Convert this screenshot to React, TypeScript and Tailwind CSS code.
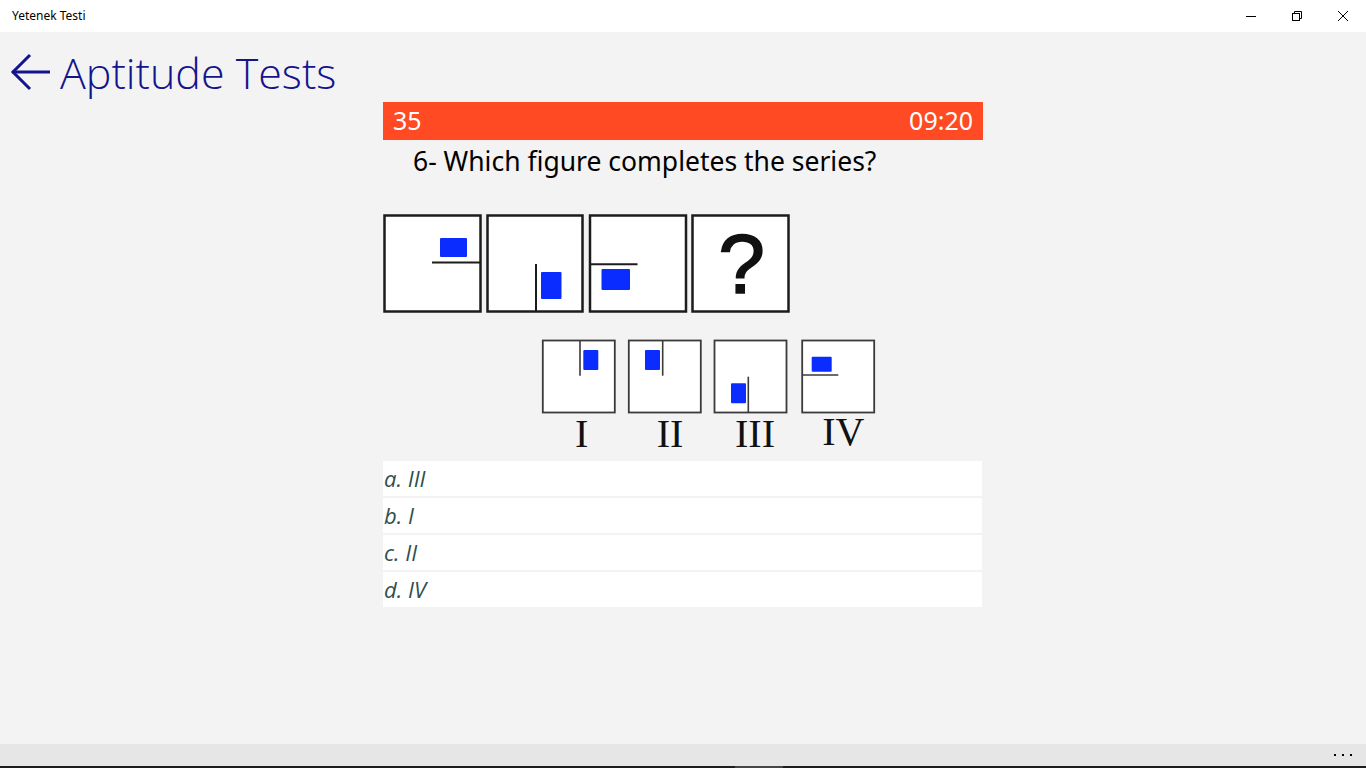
import React from "react";

function Figure() {
  const blue = "#0a2cff";
  const dark = "#1c1c1c";
  const gray = "#3a3a3a";
  return (
    <svg width="495" height="244" viewBox="0 0 495 244" className="block">
      {/* Row 1 */}
      <rect x="1.5" y="1.5" width="96" height="96" fill="#fff" stroke={dark} strokeWidth="2.5" />
      <line x1="49" y1="48.6" x2="97" y2="48.6" stroke={dark} strokeWidth="2" />
      <rect x="57" y="24" width="27" height="19" fill={blue} rx="1" />

      <rect x="104.5" y="1.5" width="95" height="96" fill="#fff" stroke={dark} strokeWidth="2.5" />
      <line x1="153" y1="50" x2="153" y2="97" stroke={dark} strokeWidth="2" />
      <rect x="158" y="58" width="20.5" height="27" fill={blue} rx="1" />

      <rect x="207" y="1.5" width="96" height="96" fill="#fff" stroke={dark} strokeWidth="2.5" />
      <line x1="207" y1="50.3" x2="254.5" y2="50.3" stroke={dark} strokeWidth="2" />
      <rect x="218.5" y="55" width="28.5" height="21" fill={blue} rx="1" />

      <rect x="309.5" y="1.5" width="96" height="96" fill="#fff" stroke={dark} strokeWidth="2.5" />
      <text
        x="358.5"
        y="79"
        textAnchor="middle"
        fontFamily="'Liberation Sans', Arial, sans-serif"
        fontSize="84"
        fontWeight="400"
        fill="#111"
        stroke="#111"
        strokeWidth="1.6"
      >
        ?
      </text>

      {/* Options */}
      <rect x="159.8" y="126.5" width="72" height="72" fill="#fff" stroke={gray} strokeWidth="1.8" />
      <line x1="197" y1="126" x2="197" y2="161.7" stroke={gray} strokeWidth="1.6" />
      <rect x="200.3" y="136" width="15" height="20" fill={blue} rx="1" />

      <rect x="245.8" y="126.5" width="72" height="72" fill="#fff" stroke={gray} strokeWidth="1.8" />
      <line x1="279.7" y1="126" x2="279.7" y2="161.7" stroke={gray} strokeWidth="1.6" />
      <rect x="262" y="136" width="15" height="20" fill={blue} rx="1" />

      <rect x="331.5" y="126.5" width="72" height="72" fill="#fff" stroke={gray} strokeWidth="1.8" />
      <line x1="365.3" y1="162.7" x2="365.3" y2="198.7" stroke={gray} strokeWidth="1.6" />
      <rect x="348" y="169.3" width="15" height="20" fill={blue} rx="1" />

      <rect x="419.2" y="126.5" width="72" height="72" fill="#fff" stroke={gray} strokeWidth="1.8" />
      <line x1="419" y1="161" x2="455.3" y2="161" stroke={gray} strokeWidth="1.6" />
      <rect x="428.7" y="142.7" width="20" height="15" fill={blue} rx="1" />

      <g fontFamily="'Liberation Serif', 'Times New Roman', serif" fontSize="40" fill="#111" textAnchor="middle">
        <text x="198.7" y="232.7">I</text>
        <text x="287" y="232.7">II</text>
        <text x="372" y="232.7">III</text>
        <text x="460.3" y="231">IV</text>
      </g>
    </svg>
  );
}

export default function App() {
  const answers = ["a. III", "b. I", "c. II", "d. IV"];
  return (
    <div className="w-[1366px] h-[768px] flex flex-col overflow-hidden bg-[#f3f3f3]" style={{ fontFamily: "'Noto Sans', 'Open Sans', sans-serif" }}>
      {/* Title bar */}
      <div className="h-[32px] bg-white flex items-center shrink-0">
        <div className="pl-[12px] text-[12px] text-black flex-1">Yetenek Testi</div>
        <div className="flex h-full">
          <div className="w-[46px] h-full flex items-center justify-center">
            <svg width="10" height="10" viewBox="0 0 10 10"><line x1="0" y1="5.5" x2="10" y2="5.5" stroke="#000" strokeWidth="1" /></svg>
          </div>
          <div className="w-[46px] h-full flex items-center justify-center">
            <svg width="10" height="10" viewBox="0 0 10 10" fill="none" stroke="#000" strokeWidth="1">
              <rect x="0.5" y="2.5" width="7" height="7" />
              <path d="M2.5 2.5 V0.5 H9.5 V7.5 H7.5" />
            </svg>
          </div>
          <div className="w-[46px] h-full flex items-center justify-center">
            <svg width="10" height="10" viewBox="0 0 10 10" stroke="#000" strokeWidth="1">
              <line x1="0" y1="0" x2="10" y2="10" />
              <line x1="10" y1="0" x2="0" y2="10" />
            </svg>
          </div>
        </div>
      </div>

      {/* Main */}
      <div className="flex-1 flex flex-col">
        <div className="h-[70px] flex items-center pl-[10px] shrink-0">
          <svg width="40" height="38" viewBox="0 0 40 38" fill="none" stroke="#14148c" strokeWidth="3" className="mt-[10px]">
            <line x1="2" y1="19" x2="40" y2="19" />
            <polyline points="20,2 3,19 20,36" />
          </svg>
          <span className="ml-[10px] mt-[14px] text-[43px] leading-none font-light text-[#14148c] pb-[4px]" style={{ fontFamily: "'Open Sans', sans-serif" }}>
            Aptitude Tests
          </span>
        </div>

        <div className="w-[600px] mx-auto flex flex-col">
          <div className="h-[38px] bg-[#ff4a24] flex items-center justify-between px-[10px] text-white text-[25px]">
            <span>35</span>
            <span>09:20</span>
          </div>
          <div className="pl-[30px] pt-[3px] text-[26.5px] text-black leading-[36px]">
            6- Which figure completes the series?
          </div>
          <div className="mt-[35px]">
            <Figure />
          </div>
          <div className="mt-[3px] flex flex-col gap-[2px] w-[599px]">
            {answers.map((a) => (
              <div key={a} className="h-[35px] bg-white flex items-center pl-[1px] text-[22px] italic text-[#2f4f4f]" style={{ fontFamily: "'Open Sans', sans-serif" }}>
                {a}
              </div>
            ))}
          </div>
        </div>
      </div>

      {/* App bar */}
      <div className="h-[22px] bg-[#e6e6e6] shrink-0 flex items-center justify-end pr-[14px]">
        <div className="flex gap-[6px]">
          <div className="w-[2px] h-[2px] bg-black" />
          <div className="w-[2px] h-[2px] bg-black" />
          <div className="w-[2px] h-[2px] bg-black" />
        </div>
      </div>
      <div className="h-[2px] bg-[#1e1e1e] shrink-0 flex">
        <div className="ml-[735px] w-[48px] bg-[#464646]" />
      </div>
    </div>
  );
}
